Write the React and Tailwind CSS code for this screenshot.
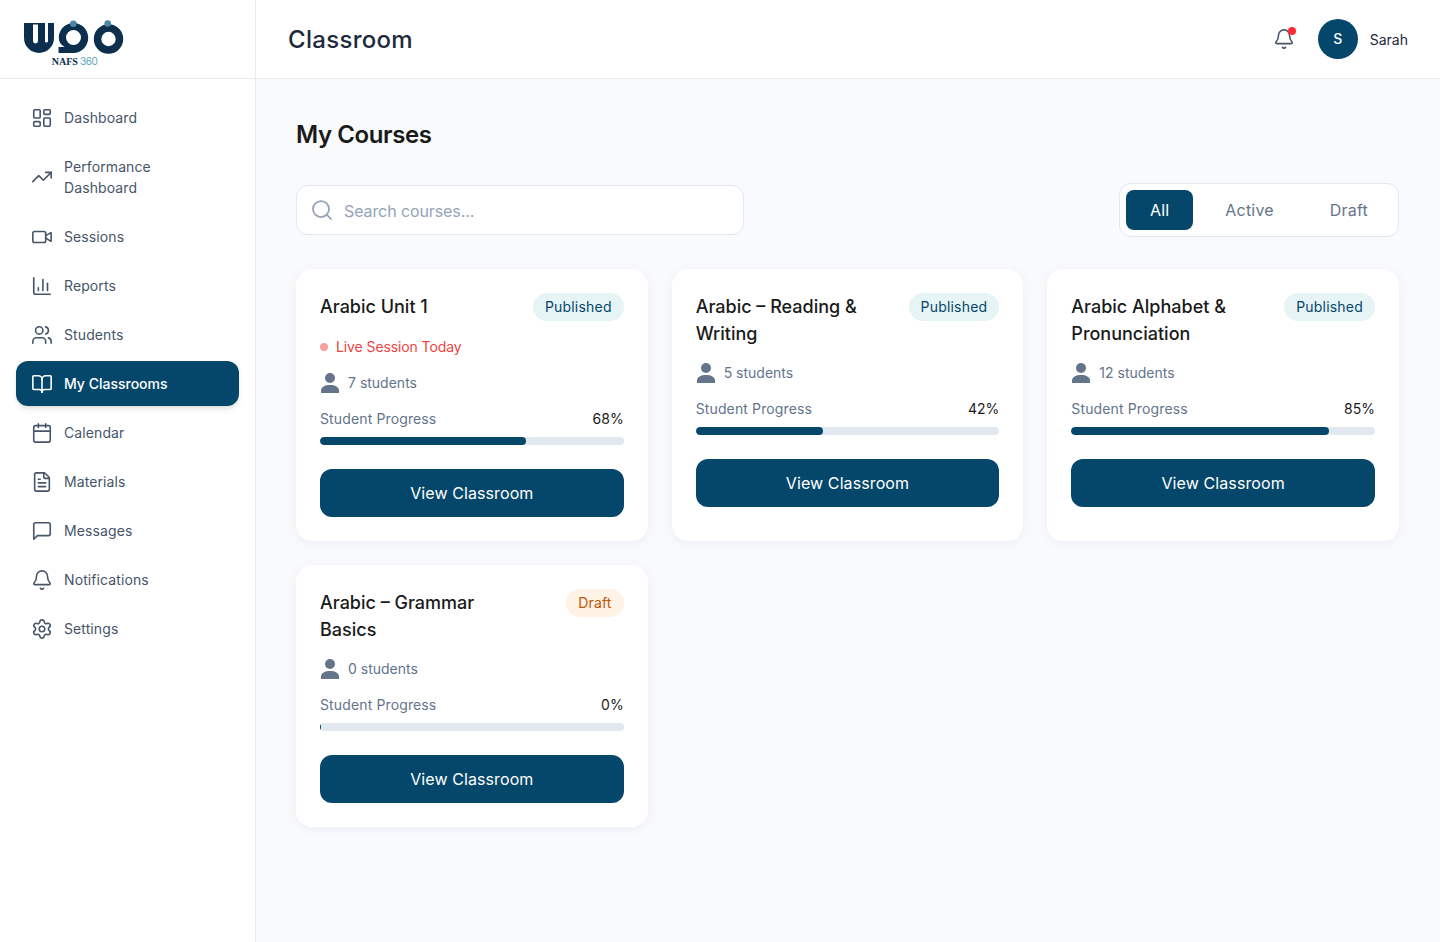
import {
  BarChart3,
  Bell,
  BookOpen,
  Calendar,
  FileText,
  LayoutDashboard,
  Search,
  Settings,
  TrendingUp,
  Users,
  Video,
} from "lucide-react";

function MessageIcon({ size, strokeWidth, className }) {
  return (
    <svg
      width={size}
      height={size}
      viewBox="0 0 24 24"
      fill="none"
      stroke="currentColor"
      strokeWidth={strokeWidth}
      strokeLinecap="round"
      strokeLinejoin="round"
      className={className}
    >
      <path d="M21 15a2 2 0 0 1-2 2H7l-4 4V5a2 2 0 0 1 2-2h14a2 2 0 0 1 2 2z" />
    </svg>
  );
}

const navItems = [
  { label: "Dashboard", icon: LayoutDashboard },
  { label: "Performance Dashboard", icon: TrendingUp, wrap: true },
  { label: "Sessions", icon: Video },
  { label: "Reports", icon: BarChart3 },
  { label: "Students", icon: Users },
  { label: "My Classrooms", icon: BookOpen, active: true },
  { label: "Calendar", icon: Calendar },
  { label: "Materials", icon: FileText },
  { label: "Messages", icon: MessageIcon },
  { label: "Notifications", icon: Bell },
  { label: "Settings", icon: Settings },
];

const courses = [
  { title: "Arabic Unit 1", status: "Published", live: true, students: 7, progress: 68 },
  { title: "Arabic – Reading & Writing", status: "Published", students: 5, progress: 42 },
  { title: "Arabic Alphabet & Pronunciation", status: "Published", students: 12, progress: 85 },
  { title: "Arabic – Grammar Basics", status: "Draft", students: 0, progress: 0 },
];

function Logo() {
  return (
    <svg width="104" height="50" viewBox="0 0 104 50" className="block">
      {/* w */}
      <path
        d="M0 3h30v15a15 15 0 0 1-30 0zM9 4.500h5v16.500a2.500 2.500 0 0 1-5 0zM21 3h3v18a1.500 1.500 0 0 1-3 0z"
        fill="#0b2f4c"
        fillRule="evenodd"
      />
      {/* middle ring with tail */}
      <path
        d="M49.500 3c8.200 0 14.700 6.500 14.700 14.700S57.700 33 49.500 33H34.500v-6h6c-4-2.500-5.700-5.500-5.700-9.300C34.800 9.500 41.300 3 49.500 3zm0 7a7.500 7.500 0 1 0 0 15 7.500 7.500 0 0 0 0-15z"
        fill="#0b2f4c"
        fillRule="evenodd"
      />
      <circle cx="49.300" cy="3.700" r="3.300" fill="#4a86a5" />
      {/* right ring */}
      <path
        d="M84.500 4.300a14.700 14.700 0 1 1 0 29.400 14.700 14.700 0 0 1 0-29.400zm0 7.500a7.200 7.200 0 1 0 0 14.400 7.200 7.200 0 0 0 0-14.400z"
        fill="#0b2f4c"
        fillRule="evenodd"
      />
      <circle cx="83.700" cy="3.500" r="3.300" fill="#4a86a5" />
      <text x="27.700" y="45" fontFamily="Liberation Serif" fontWeight="700" fontSize="10" fill="#0b2f4c">
        NAFS
      </text>
      <text x="56" y="45" fontFamily="Inter" fontSize="10" letterSpacing="-0.5" fill="#5ba3c4">
        360
      </text>
    </svg>
  );
}

function PersonIcon() {
  return (
    <svg width="20" height="22" viewBox="0 0 20 22" className="shrink-0" fill="#64748b">
      <circle cx="10" cy="6" r="5" />
      <path d="M1 21v-2.500C1 15 5 13 10 13s9 2 9 5.500V21z" />
    </svg>
  );
}

function Sidebar() {
  return (
    <aside className="w-64 shrink-0 bg-white border-r border-[#e8ebf0]">
      <div className="h-[79px] border-b border-[#e8ebf0] pl-6 pt-5">
        <Logo />
      </div>
      <nav className="flex flex-col gap-1 p-4">
        {navItems.map((item) => {
          const Icon = item.icon;
          return (
            <a
              key={item.label}
              className={`flex items-center gap-[11px] pl-[15px] pr-4 rounded-xl text-sm leading-[21px] ${
                item.wrap ? "py-3" : "h-[45px]"
              } ${
                item.active
                  ? "bg-[#05476b] text-white font-medium shadow-md"
                  : "text-[#475569] tracking-[0.1px]"
              }`}
            >
              <Icon size={22} strokeWidth={1.75} className="shrink-0" />
              <span className={item.wrap ? "w-[100px]" : ""}>{item.label}</span>
            </a>
          );
        })}
      </nav>
    </aside>
  );
}

function Topbar() {
  return (
    <header className="h-[79px] shrink-0 bg-white border-b border-[#e8ebf0] flex items-center justify-between pl-8 pr-8">
      <h1 className="text-2xl font-medium text-[#1e293b] tracking-[0.3px] pt-[2px]">Classroom</h1>
      <div className="flex items-center">
        <div className="relative mr-[23px]">
          <Bell size={22} strokeWidth={1.75} className="text-[#475569]" />
          <span className="absolute -top-px right-[-1px] w-2 h-2 rounded-full bg-[#ff2b36]" />
        </div>
        <div className="w-10 h-10 rounded-full bg-[#05476b] text-white text-sm font-medium flex items-center justify-center">
          S
        </div>
        <span className="ml-3 text-sm text-[#1e293b] pt-px">Sarah</span>
      </div>
    </header>
  );
}

function CourseCard({ course }) {
  const isDraft = course.status === "Draft";
  return (
    <div className="bg-white rounded-2xl p-6 shadow-[0_2px_12px_rgba(15,40,80,0.05)]">
      <div className="flex items-start justify-between gap-3 mb-[14px]">
        <h3 className="w-[190px] text-lg leading-[27px] font-medium text-[#1a1a1a]">{course.title}</h3>
        <span
          className={`shrink-0 h-7 px-3 rounded-full text-sm tracking-[0.2px] flex items-center ${
            isDraft ? "bg-[#fff3e6] text-[#c2560c]" : "bg-[#e6f4f6] text-[#05476b]"
          }`}
        >
          {course.status}
        </span>
      </div>
      {course.live && (
        <div className="flex items-center gap-2 mt-[15px] mb-[14px] text-sm leading-[21px] tracking-[-0.1px] text-[#ef4444]">
          <span className="w-2 h-2 rounded-full bg-[#f9a0a0]" />
          Live Session Today
        </div>
      )}
      <div className="flex items-center gap-2 h-6 mb-[13px] text-sm text-[#64748b]">
        <PersonIcon />
        {course.students} students
      </div>
      <div className="flex items-center justify-between mb-2 text-sm leading-[21px]">
        <span className="text-[#64748b] tracking-[0.13px]">Student Progress</span>
        <span className="text-[#1a1a1a]">{course.progress}%</span>
      </div>
      <div className="h-2 rounded-full bg-[#e2e8f0] overflow-hidden mb-6">
        <div
          className="h-full rounded-full bg-[#05476b] min-w-[1px]"
          style={{ width: `${course.progress}%` }}
        />
      </div>
      <button className="w-full h-12 rounded-xl bg-[#05476b] text-white text-base tracking-[0.1px]">
        View Classroom
      </button>
    </div>
  );
}

export default function App() {
  return (
    <div className="flex min-h-[942px] bg-[#f8fafc] font-['Inter',sans-serif]">
      <Sidebar />
      <div className="flex-1 flex flex-col min-w-0">
        <Topbar />
        <main className="pl-10 pr-[41px] pt-10">
          <h2 className="text-2xl leading-8 font-semibold text-[#1a1a1a] tracking-[-0.4px] mb-8">My Courses</h2>
          <div className="flex items-center justify-between mb-8">
            <div className="w-[448px] h-[50px] rounded-xl bg-white border border-[#e2e8f0] flex items-center gap-[10px] px-[13px]">
              <Search size={24} strokeWidth={1.75} className="text-[#94a3b8] shrink-0" />
              <span className="text-base text-[#94a3b8] tracking-[-0.1px] pt-px">Search courses...</span>
            </div>
            <div className="flex gap-2 p-[6px] bg-white border border-[#e2e8f0] rounded-xl tracking-[0.2px]">
              <button className="h-10 px-6 rounded-lg bg-[#05476b] text-white text-base">All</button>
              <button className="h-10 px-6 text-base text-[#64748b]">Active</button>
              <button className="h-10 px-6 text-base text-[#64748b]">Draft</button>
            </div>
          </div>
          <div className="grid grid-cols-3 gap-6">
            {courses.map((course) => (
              <CourseCard key={course.title} course={course} />
            ))}
          </div>
        </main>
      </div>
    </div>
  );
}
